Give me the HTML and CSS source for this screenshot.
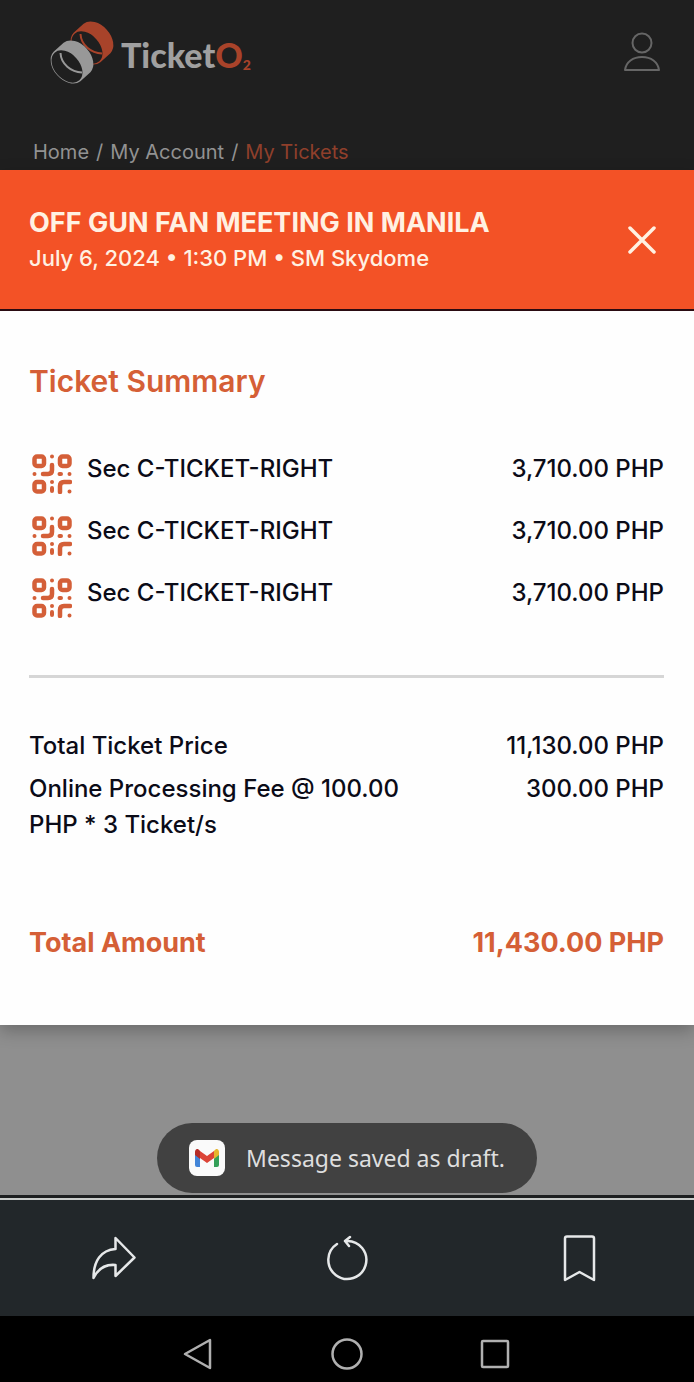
FILE: index.html
```html
<!DOCTYPE html>
<html lang="en">
<head>
<meta charset="utf-8">
<meta name="viewport" content="width=device-width, initial-scale=1">
<title>TicketO2 – My Tickets</title>
<link rel="stylesheet" href="styles.css">
</head>
<body>
<svg class="defs" aria-hidden="true">
  <symbol id="qr" viewBox="0 0 40 40">
    <g fill="none" stroke="currentColor" stroke-width="4.500" stroke-linecap="round" stroke-linejoin="round">
      <rect x="2.500" y="2.500" width="9.500" height="9.500" rx="2.500"/>
      <rect x="28" y="2.500" width="9.500" height="9.500" rx="2.500"/>
      <rect x="2.500" y="28" width="9.500" height="9.500" rx="2.500"/>
      <path d="M20 11v5q0 4-4 4h-5M28 38v-6q0-4 4-4h6"/>
      <path stroke-width="4" d="M20 34v3M27.500 20h1.500M20 2.500h.01M2.500 20h.01M37.500 20h.01M20 28h.01M37.500 37.500h.01"/>
    </g>
  </symbol>
  <symbol id="ring" viewBox="0 0 62 62" overflow="visible">
    <path class="ring-band" d="M2.600 30.700 12.600 21.700A20 14 48 0 1 39.400 51.300L29.400 60.300A20 14 48 0 1 2.600 30.700Z"/>
    <ellipse class="ring-hole" cx="16" cy="45.500" rx="18.500" ry="12.500" transform="rotate(48 16 45.500)"/>
    <path class="ring-rim" d="M9.500 32C10 43 20 51 31 51.500"/>
  </symbol>
</svg>

<header class="site-header">
  <div class="site-bar">
    <a class="logo" href="#">
      <svg class="logo-mark" viewBox="0 0 62 62" aria-hidden="true">
        <use class="ring-back" href="#ring" x="20" y="-19" width="62" height="62"/>
        <use class="ring-front" href="#ring" width="62" height="62"/>
      </svg>
      <span class="logo-text">Ticket<span class="logo-o">O<sub>2</sub></span></span>
    </a>
    <button class="icon-button account" aria-label="Account">
      <svg width="38" height="40" viewBox="0 0 38 40" fill="none" stroke="currentColor" stroke-width="2"><circle cx="19" cy="11" r="9.500"/><path d="M2 38c1-8 8-13 17-13s16 5 17 13Z" stroke-linejoin="round"/></svg>
    </button>
  </div>
  <nav class="breadcrumb" aria-label="Breadcrumb">
    <a href="#">Home</a><span>/</span><a href="#">My Account</a><span>/</span><a class="current" href="#" aria-current="page">My Tickets</a>
  </nav>
</header>

<main class="backdrop">
  <section class="modal" role="dialog" aria-labelledby="event-title">
    <header class="modal-header">
      <div>
        <h1 class="event-title" id="event-title">OFF GUN FAN MEETING IN MANILA</h1>
        <p class="event-meta">July 6, 2024 • 1:30 PM • SM Skydome</p>
      </div>
      <button class="icon-button close" aria-label="Close">
        <svg width="28" height="28" viewBox="0 0 28 28" fill="none" stroke="currentColor" stroke-width="3.500" stroke-linecap="round"><path d="M2 2l24 24M26 2L2 26"/></svg>
      </button>
    </header>
    <div class="modal-body">
      <h2 class="summary-title">Ticket Summary</h2>
      <ul class="tickets">
        <li class="ticket"><svg class="qr" aria-hidden="true"><use href="#qr"/></svg><span class="name">Sec C-TICKET-RIGHT</span><span>3,710.00 PHP</span></li>
        <li class="ticket"><svg class="qr" aria-hidden="true"><use href="#qr"/></svg><span class="name">Sec C-TICKET-RIGHT</span><span>3,710.00 PHP</span></li>
        <li class="ticket"><svg class="qr" aria-hidden="true"><use href="#qr"/></svg><span class="name">Sec C-TICKET-RIGHT</span><span>3,710.00 PHP</span></li>
      </ul>
      <dl class="costs">
        <div class="cost"><dt>Total Ticket Price</dt><dd>11,130.00 PHP</dd></div>
        <div class="cost"><dt>Online Processing Fee @ 100.00 PHP * 3 Ticket/s</dt><dd>300.00 PHP</dd></div>
        <div class="cost total"><dt>Total Amount</dt><dd>11,430.00 PHP</dd></div>
      </dl>
    </div>
  </section>
  <div class="toast" role="status">
    <svg class="gmail" viewBox="0 0 36 36" aria-hidden="true">
      <rect width="36" height="36" rx="8" fill="#fafafa"/>
      <path fill="#4285d8" d="M6 13l5 4v10H8q-2 0-2-2Z"/>
      <path fill="#34a059" d="M30 13l-5 4v10h3q2 0 2-2Z"/>
      <path fill="#e6b52c" d="M25 11c3-4 5-1 5 1v3l-5 4Z"/>
      <path fill="#b52c27" d="M11 11c-3-4-5-1-5 1v3l5 4Z"/>
      <path fill="#dc4437" d="M11 11l7 5 7-5v7l-7 5-7-5Z"/>
    </svg>
    <span>Message saved as draft.</span>
  </div>
</main>

<footer>
  <div class="toolbar">
    <button class="icon-button" aria-label="Share">
      <svg width="48" height="48" viewBox="0 0 48 48" fill="none" stroke="currentColor" stroke-width="2.500" stroke-linejoin="round"><path d="M23.500 4l19 19.500L23.500 42V31C13 30 6 35 1.500 44 1.500 27 9 16 23.500 15Z"/></svg>
    </button>
    <button class="icon-button" aria-label="Reload">
      <svg width="48" height="48" viewBox="0 0 48 48" fill="none" stroke="currentColor" stroke-width="2.500" stroke-linecap="round" stroke-linejoin="round"><path d="M14 10A19 19 0 1 0 23 7M27 3l-5 4 4 5"/></svg>
    </button>
    <button class="icon-button" aria-label="Bookmark">
      <svg width="48" height="48" viewBox="0 0 48 48" fill="none" stroke="currentColor" stroke-width="2.500" stroke-linejoin="round"><path d="M13 2.500h25q2 0 2 2V46l-14.500-8L11 46V4.500q0-2 2-2Z"/></svg>
    </button>
  </div>
  <div class="system-nav">
    <button class="icon-button" aria-label="Back">
      <svg width="32" height="32" viewBox="0 0 32 32" fill="none" stroke="currentColor" stroke-width="2.500" stroke-linejoin="round"><path d="M27 2v28L2 16Z"/></svg>
    </button>
    <button class="icon-button" aria-label="Home">
      <svg width="32" height="32" viewBox="0 0 32 32" fill="none" stroke="currentColor" stroke-width="2.500"><circle cx="16" cy="16" r="14.500"/></svg>
    </button>
    <button class="icon-button" aria-label="Recent apps">
      <svg width="32" height="32" viewBox="0 0 32 32" fill="none" stroke="currentColor" stroke-width="2.500"><rect x="3" y="3" width="26" height="26" rx="1"/></svg>
    </button>
  </div>
</footer>
</body>
</html>
```
FILE: styles.css
```css
* { box-sizing: border-box; }

body {
  margin: 0;
  min-height: 100vh;
  display: flex;
  flex-direction: column;
  background: #000;
  color: #0b0b17;
  font-family: Inter, "Liberation Sans", sans-serif;
  font-size: 24px;
  line-height: 36px;
}

h1, h2, p, ul, dl, dd { margin: 0; padding: 0; }
ul { list-style: none; }
a { color: inherit; text-decoration: none; }
svg { display: block; flex: none; }
.defs { width: 0; height: 0; position: absolute; }

.icon-button {
  display: flex;
  padding: 0;
  border: 0;
  background: none;
  color: inherit;
  cursor: pointer;
}

.site-header {
  padding: 20px 33px 2px;
  background: #1f1f1f;
  color: #929292;
}

.site-bar {
  display: flex;
  justify-content: space-between;
  align-items: center;
  height: 64px;
  padding-left: 18px;
}

.logo { display: flex; align-items: center; gap: 8px; }
.logo-mark { width: 62px; height: 62px; overflow: visible; }
.ring-back, .logo-o { color: #a8432a; }
.ring-front { color: #989898; }
.ring-band { fill: currentColor; }
.ring-hole { fill: #1f1f1f; }
.ring-rim { fill: none; stroke: currentColor; stroke-width: 2px; }
.logo-text {
  padding-top: 6px;
  color: #a0a0a0;
  font-family: Lato, sans-serif;
  font-size: 34px;
  font-weight: 900;
}
.logo-text sub { font-size: 14px; vertical-align: -2px; line-height: 0; }
.account { color: #666; }

.breadcrumb {
  display: flex;
  gap: 7px;
  margin-top: 52px;
  font-size: 20px;
  line-height: 32px;
}
.current { color: #8f3f2b; }

.backdrop {
  flex: 1;
  display: flex;
  flex-direction: column;
  align-items: center;
  background: #8f8f8f;
  border-bottom: 3px solid #1d1f20;
}

.modal {
  width: 100%;
  background: #fefefe;
  box-shadow: 0 6px 16px rgba(0, 0, 0, 0.25);
}

.modal-header {
  display: flex;
  justify-content: space-between;
  align-items: center;
  padding: 35px 38px 34px 29px;
  background: #f35226;
  border-bottom: 2px solid #2a0b12;
  color: #fff1e2;
}
.event-title { font-size: 27px; font-weight: 700; line-height: 36px; }
.event-meta { font-size: 22px; font-weight: 500; line-height: 34px; }

.modal-body { padding: 50px 30px 64px 29px; }
.summary-title {
  color: #d55f36;
  font-size: 30px;
  font-weight: 600;
  line-height: 40px;
}

.tickets {
  display: grid;
  gap: 18px;
  margin-top: 51px;
  padding-bottom: 55px;
  border-bottom: 3px solid #d6d6d6;
}
.ticket { display: flex; align-items: flex-start; line-height: 34px; }
.name { flex: 1; }
.qr {
  width: 40px;
  height: 40px;
  margin: 2px 15px 2px 3px;
  color: #d45f38;
}

.tickets, .costs { font-weight: 500; }
.costs { display: grid; gap: 7px; margin-top: 50px; }
.cost { display: flex; justify-content: space-between; }
.cost dt { max-width: 400px; }
.total {
  margin-top: 75px;
  color: #d55f36;
  font-size: 27px;
  font-weight: 700;
}

.toast {
  display: flex;
  align-items: center;
  gap: 21px;
  height: 70px;
  margin: auto 0 2px;
  padding: 0 32px;
  border-radius: 35px;
  background: #414141;
  color: #dedede;
  font-family: "Noto Sans", sans-serif;
  font-size: 23px;
}
.gmail { width: 36px; height: 36px; }

.toolbar {
  display: grid;
  grid-template-columns: repeat(3, 1fr);
  place-items: center;
  height: 118px;
  border-top: 2px solid #c9cccb;
  background: #22272a;
  color: #e6e8e9;
}

.system-nav {
  display: flex;
  justify-content: center;
  align-items: center;
  gap: 116px;
  height: 66px;
  padding-top: 10px;
  background: #000;
  color: #b0b0b0;
}
```
